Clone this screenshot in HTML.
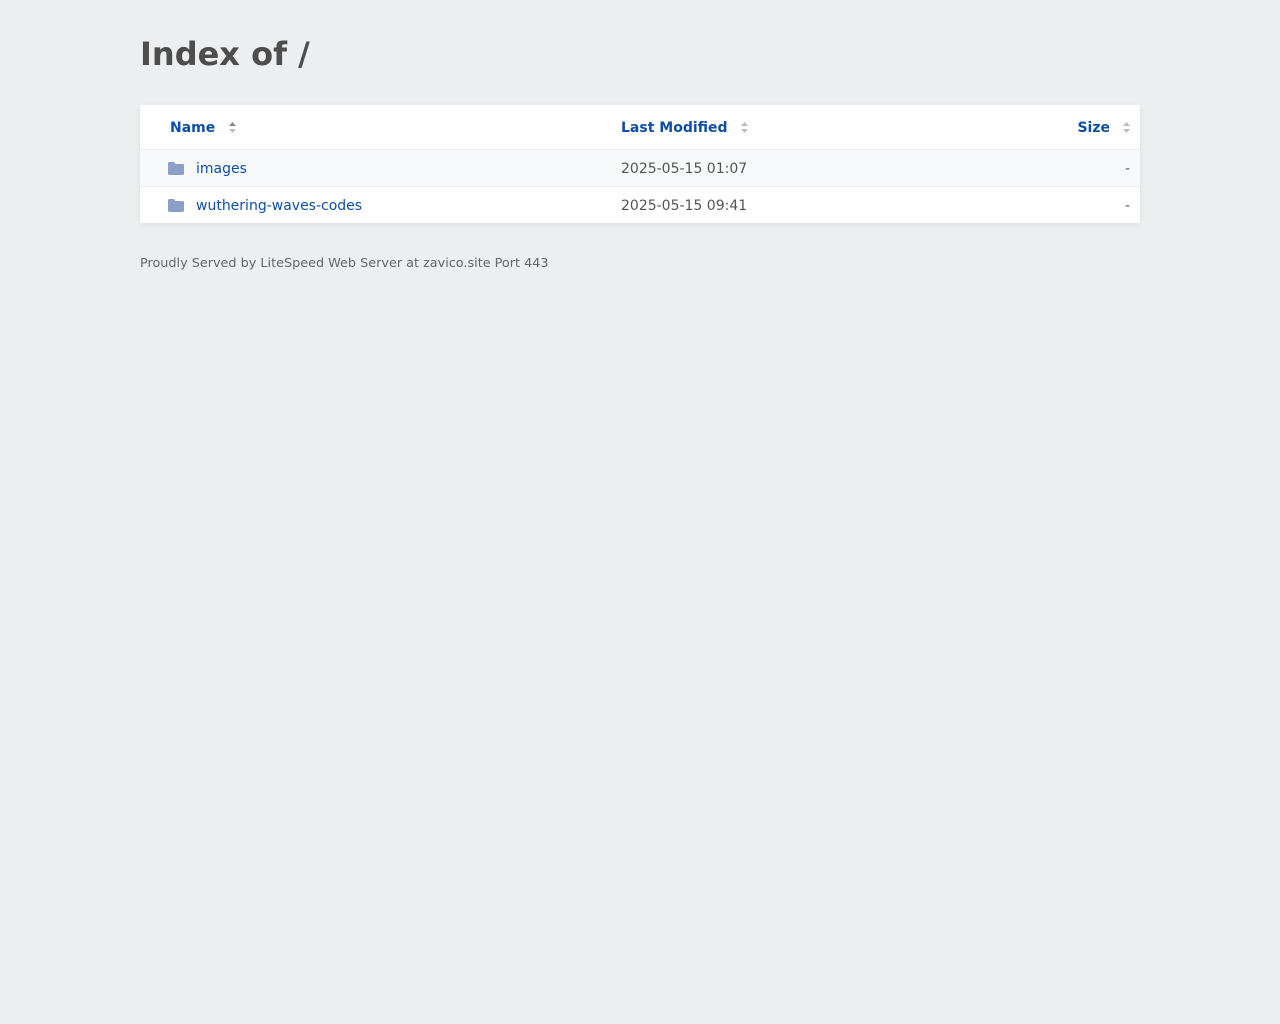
<!DOCTYPE html>
<html><head><meta charset="utf-8"><style>
body{margin:0;background:#eceeef;font-family:"DejaVu Sans",sans-serif;color:#555;}
.wrap{position:absolute;left:140px;top:0;width:1000px;}
h1{position:absolute;top:32px;left:0;margin:0;font-size:32px;font-weight:bold;color:#4d4d4d;line-height:44px;}
.tbl{position:absolute;top:105px;left:0;width:1000px;background:#fff;box-shadow:0 2px 6px rgba(0,0,0,.06);}
.row{position:relative;height:36px;border-top:1px solid #eceeef;font-size:14px;}
.hdr{height:44px;border-top:none;font-weight:bold;color:#0d4ea6;}
.c{position:absolute;line-height:20px;}
.hdr .c{top:13px;}
.row:not(.hdr) .c{top:9px;}
.alt{background:#f8f9fa;}
a{color:#0d4ea6;text-decoration:none;}
.sort{position:absolute;width:7px;height:11px;}
.folder{position:absolute;left:28px;top:12px;width:16px;height:13px;}
.foot{position:absolute;top:255px;left:0;font-size:12.8px;color:#666;line-height:18px;}
</style></head><body>
<div class="wrap">
<h1>Index of /</h1>
<div class="tbl">
 <div class="row hdr">
  <div class="c" style="left:30px">Name</div>
  <svg class="sort" style="left:89px;top:17px" viewBox="0 0 7 11"><path d="M0 4L3.5 0L7 4Z" fill="#888"/><path d="M0 7L3.5 11L7 7Z" fill="#bbb"/></svg>
  <div class="c" style="left:481px">Last Modified</div>
  <svg class="sort" style="left:601px;top:17px" viewBox="0 0 7 11"><path d="M0 4L3.5 0L7 4Z" fill="#bbb"/><path d="M0 7L3.5 11L7 7Z" fill="#bbb"/></svg>
  <div class="c" style="right:30px">Size</div>
  <svg class="sort" style="left:983px;top:17px" viewBox="0 0 7 11"><path d="M0 4L3.5 0L7 4Z" fill="#bbb"/><path d="M0 7L3.5 11L7 7Z" fill="#bbb"/></svg>
 </div>
 <div class="row alt">
  <svg class="folder" viewBox="0 0 16 13"><path d="M0 1.5Q0 0 1.5 0H6L7.5 2H14.5Q16 2 16 3.5V11.5Q16 13 14.5 13H1.5Q0 13 0 11.5Z" fill="#8aa0c6"/></svg>
  <div class="c" style="left:56px"><a>images</a></div>
  <div class="c" style="left:481px">2025-05-15 01:07</div>
  <div class="c" style="right:10px">-</div>
 </div>
 <div class="row">
  <svg class="folder" viewBox="0 0 16 13"><path d="M0 1.5Q0 0 1.5 0H6L7.5 2H14.5Q16 2 16 3.5V11.5Q16 13 14.5 13H1.5Q0 13 0 11.5Z" fill="#8aa0c6"/></svg>
  <div class="c" style="left:56px"><a>wuthering-waves-codes</a></div>
  <div class="c" style="left:481px">2025-05-15 09:41</div>
  <div class="c" style="right:10px">-</div>
 </div>
</div>
<div class="foot">Proudly Served by LiteSpeed Web Server at zavico.site Port 443</div>
</div>
</body></html>
